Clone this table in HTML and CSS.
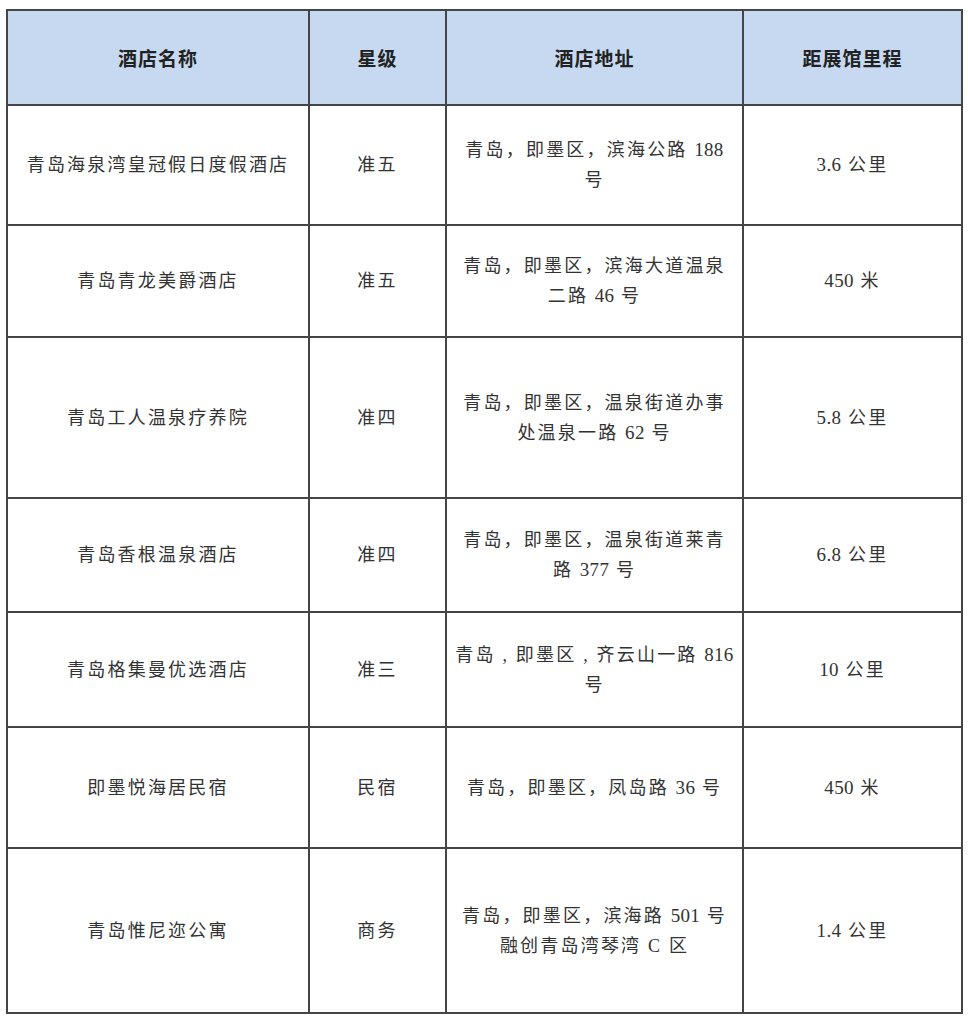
FILE: index.html
```html
<!DOCTYPE html>
<html lang="zh">
<head>
<meta charset="utf-8">
<title>酒店列表</title>
<link rel="stylesheet" href="styles.css">
</head>
<body>
<table class="hotels">
  <colgroup>
    <col class="c1"><col class="c2"><col class="c3"><col class="c4">
  </colgroup>
  <thead>
    <tr class="r-head">
      <th>酒店名称</th><th>星级</th><th>酒店地址</th><th>距展馆里程</th>
    </tr>
  </thead>
  <tbody>
    <tr class="r1">
      <td>青岛海泉湾皇冠假日度假酒店</td><td>准五</td>
      <td class="addr">青岛，即墨区，滨海公路 <span class="num">188</span><br>号</td><td><span class="num">3.6</span> 公里</td>
    </tr>
    <tr class="r2">
      <td>青岛青龙美爵酒店</td><td>准五</td>
      <td class="addr">青岛，即墨区，滨海大道温泉<br>二路 <span class="num">46</span> 号</td><td><span class="num">450</span> 米</td>
    </tr>
    <tr class="r3">
      <td>青岛工人温泉疗养院</td><td>准四</td>
      <td class="addr">青岛，即墨区，温泉街道办事<br>处温泉一路 <span class="num">62</span> 号</td><td><span class="num">5.8</span> 公里</td>
    </tr>
    <tr class="r4">
      <td>青岛香根温泉酒店</td><td>准四</td>
      <td class="addr">青岛，即墨区，温泉街道莱青<br>路 <span class="num">377</span> 号</td><td><span class="num">6.8</span> 公里</td>
    </tr>
    <tr class="r5">
      <td>青岛格集曼优选酒店</td><td>准三</td>
      <td class="addr">青岛 , 即墨区 , 齐云山一路 <span class="num">816</span><br>号</td><td><span class="num">10</span> 公里</td>
    </tr>
    <tr class="r6">
      <td>即墨悦海居民宿</td><td>民宿</td>
      <td class="addr">青岛，即墨区，凤岛路 <span class="num">36</span> 号</td><td><span class="num">450</span> 米</td>
    </tr>
    <tr class="r7">
      <td>青岛惟尼迩公寓</td><td>商务</td>
      <td class="addr">青岛，即墨区，滨海路 <span class="num">501</span> 号<br>融创青岛湾琴湾 C 区</td><td><span class="num">1.4</span> 公里</td>
    </tr>
  </tbody>
</table>
</body>
</html>
```
FILE: styles.css
```css
html, body {
  margin: 0;
  padding: 0;
  background: #ffffff;
}

body {
  padding: 9px 0 0 6px;
}

.hotels {
  border-collapse: collapse;
  table-layout: fixed;
  width: 955px;
  font-family: "Liberation Serif", "Noto Sans CJK SC", serif;
  color: #333333;
}

.c1 { width: 302px; }
.c2 { width: 137px; }
.c3 { width: 297px; }
.c4 { width: 219px; }

.hotels th,
.hotels td {
  border: 2px solid #454545;
  text-align: center;
  vertical-align: middle;
  padding: 0;
}

.hotels th {
  background: #c7d9f0;
  font-family: "Noto Sans CJK SC", sans-serif;
  font-weight: 700;
  font-size: 19px;
  letter-spacing: 1px;
  color: #222222;
}

.hotels td {
  font-size: 18px;
  letter-spacing: 2.2px;
  line-height: 30px;
}

.addr {
  white-space: nowrap;
}

.num {
  font-size: 19px;
  letter-spacing: 0.3px;
}

.r-head { height: 95px; }
.r1 { height: 120px; }
.r2 { height: 112px; }
.r3 { height: 161px; }
.r4 { height: 114px; }
.r5 { height: 115px; }
.r6 { height: 121px; }
.r7 { height: 165px; }
```
